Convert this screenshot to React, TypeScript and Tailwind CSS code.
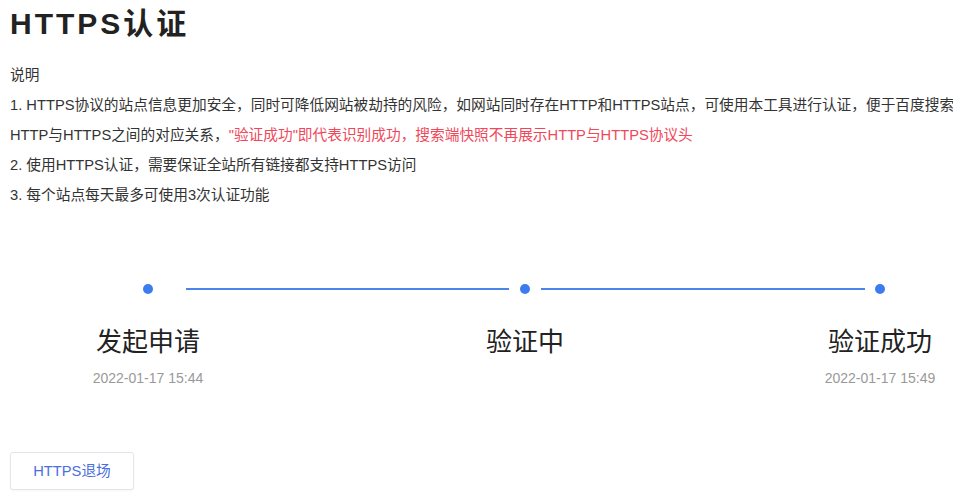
const FONT = "font-['Liberation_Sans','Noto_Sans_CJK_SC',sans-serif]";

interface Step {
  label: string;
  date?: string;
}

const steps: Step[] = [
  { label: "发起申请", date: "2022-01-17 15:44" },
  { label: "验证中" },
  { label: "验证成功", date: "2022-01-17 15:49" },
];

function Dot() {
  return <div className="w-[10px] h-[10px] rounded-full bg-[#3b7cf0] shrink-0" />;
}

function Line({ width }: { width: string }) {
  return <div className={`${width} h-[2px] bg-[#4a86e8] shrink-0`} />;
}

function StepLabel({ step }: { step: Step }) {
  return (
    <div className="w-[160px] flex flex-col items-center shrink-0">
      <div className="text-[26px] leading-[36px] text-[#222] whitespace-nowrap">{step.label}</div>
      <div className="mt-[8px] h-[20px] text-[14px] leading-[20px] text-[#999] whitespace-nowrap">
        {step.date ?? ""}
      </div>
    </div>
  );
}

export default function App() {
  return (
    <div className={`${FONT} w-[953px] h-[500px] overflow-hidden bg-white text-[#333]`}>
      <div className="px-[10px]">
        <h1 className="h-[48px] leading-[48px] text-[30px] font-bold tracking-[3px] text-[#222] whitespace-nowrap">
          HTTPS认证
        </h1>
        <div className="mt-[12px] text-[14.7px] leading-[30px] whitespace-nowrap">
          <div>说明</div>
          <div>
            1. HTTPS协议的站点信息更加安全，同时可降低网站被劫持的风险，如网站同时存在HTTP和HTTPS站点，可使用本工具进行认证，便于百度搜索识别
          </div>
          <div>
            HTTP与HTTPS之间的对应关系，
            <span className="text-[#f0485a]">
              "验证成功"即代表识别成功，搜索端快照不再展示HTTP与HTTPS协议头
            </span>
          </div>
          <div>2. 使用HTTPS认证，需要保证全站所有链接都支持HTTPS访问</div>
          <div>3. 每个站点每天最多可使用3次认证功能</div>
        </div>
      </div>

      <div className="mt-[74px]">
        <div className="flex items-center h-[10px] ml-[143px]">
          <Dot />
          <div className="w-[33px] shrink-0" />
          <Line width="w-[323px]" />
          <div className="w-[11px] shrink-0" />
          <Dot />
          <div className="w-[11px] shrink-0" />
          <Line width="w-[324px]" />
          <div className="w-[10px] shrink-0" />
          <Dot />
        </div>
        <div className="flex ml-[68px] mt-[30px]">
          <StepLabel step={steps[0]} />
          <div className="w-[217px] shrink-0" />
          <StepLabel step={steps[1]} />
          <div className="w-[195px] shrink-0" />
          <StepLabel step={steps[2]} />
        </div>
      </div>

      <div className="px-[10px] mt-[64px]">
        <button
          type="button"
          className="w-[124px] h-[38px] rounded-[3px] border border-[#e3e5ea] bg-white text-[14.7px] text-[#4a6fdc] shadow-[0_1px_2px_rgba(0,0,0,0.04)]"
        >
          HTTPS退场
        </button>
      </div>
    </div>
  );
}
